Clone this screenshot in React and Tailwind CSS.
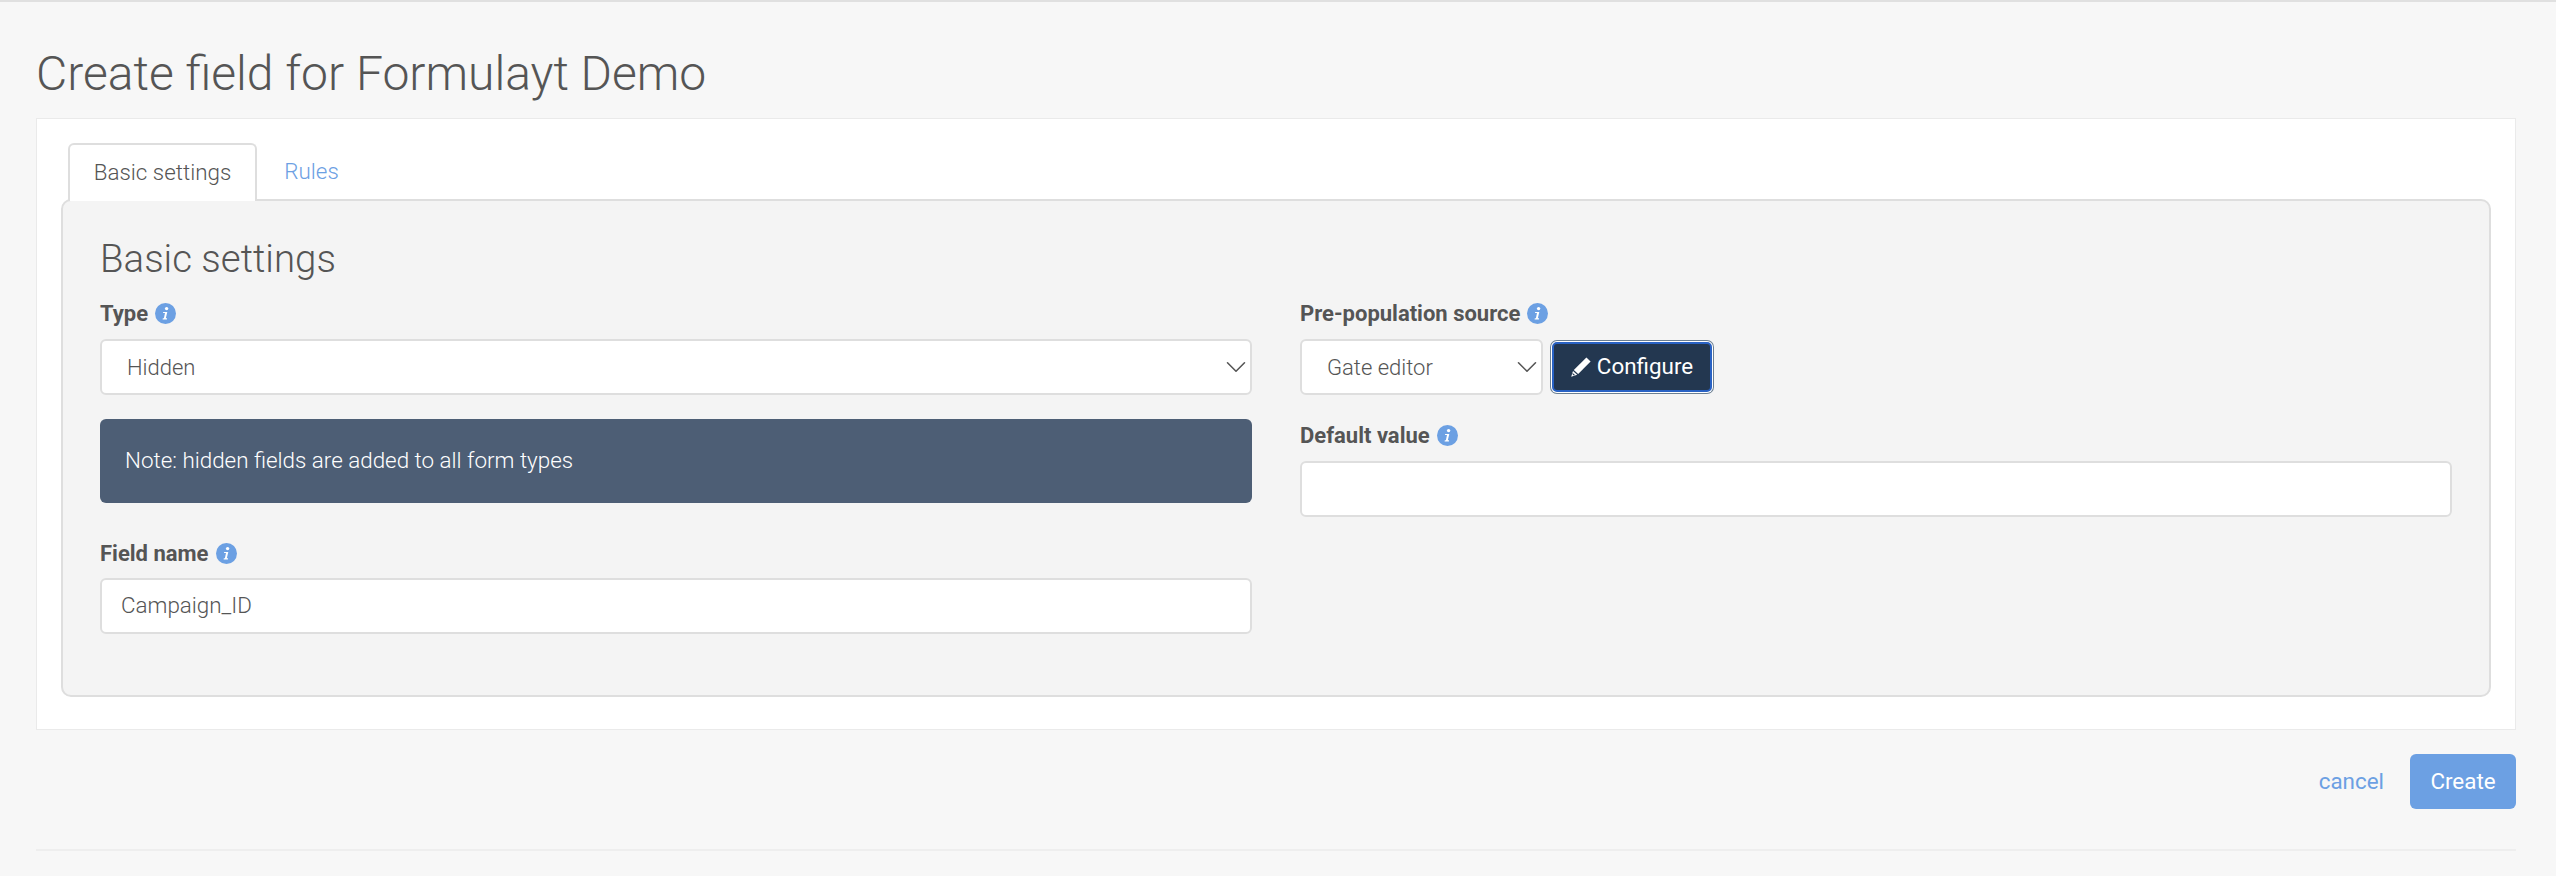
import React from "react";
import { ChevronDown } from "lucide-react";

const InfoIcon = () => (
  <svg width="21" height="21" viewBox="0 0 21 21" className="shrink-0">
    <circle cx="10.5" cy="10.5" r="10.5" fill="#6ca0e3" />
    <circle cx="11.6" cy="5.6" r="1.7" fill="#fff" />
    <path d="M8.2 9h4.1l-1.5 6.3h1.3l-.2 1.1H7.6l.2-1.1h1.1L10 10.1H8z" fill="#fff" />
  </svg>
);

const PencilIcon = () => (
  <svg width="20" height="20" viewBox="0 0 20 20" className="shrink-0">
    <path d="M15.4.6 19.6 4.4 7.2 17 2.8 13z" fill="#fff" />
    <path d="M2 14l4.2 3.8L.2 19.8z" fill="#fff" />
    <path d="M1.7 15.9l2.3 2-1.2.5-1.5-1.3z" fill="#233750" />
  </svg>
);

const FieldLabel = ({ children }) => (
  <div className="flex h-[26px] items-center gap-[7px] text-[22px] font-bold text-[#555]">
    <span>{children}</span>
    <InfoIcon />
  </div>
);

const SelectBox = ({ value, className }) => (
  <div className={`flex h-[56px] items-center justify-between rounded-[6px] border-2 border-[#dedede] bg-white pl-[25px] ${className}`}>
    <span className="text-[22px] font-light text-[#555]">{value}</span>
    <ChevronDown size={34} strokeWidth={1.1} color="#555" className="-mr-[3px] shrink-0" />
  </div>
);

export default function App() {
  return (
    <div className="min-h-[876px] border-t-2 border-[#e0e0e0] bg-[#f7f7f7] pr-[40px] pl-[36px] font-['Roboto',sans-serif] text-[#555]">
      {/* TITLE */}
      <h1 className="h-[116px] pt-[43px] text-[48px] leading-[58px] font-light text-[#555]">
        Create field for Formulayt Demo
      </h1>

      {/* CARD */}
      <div className="h-[612px] border border-[#eaeaea] bg-white pt-[24px] pr-[24px] pl-[24px]">
        {/* TABS */}
        <div className="relative z-10 flex h-[58px] pl-[7px]">
          <div className="flex h-[58px] w-[189px] items-center justify-center rounded-t-[6px] border-2 border-b-0 border-[#dedede] bg-white text-[22.4px] font-light text-[#555]">
            Basic settings
          </div>
          <div className="flex w-[109px] items-center justify-center text-[22.4px] font-light text-[#6ca0e3]">
            Rules
          </div>
        </div>

        {/* PANEL */}
        <div className="-mt-[2px] h-[498px] rounded-[10px] border-2 border-[#dedede] bg-[#f4f4f4] px-[37px] pt-[34px]">
          <h2 className="h-[65px] text-[38.4px] leading-[48px] font-light text-[#555]">Basic settings</h2>

          <div className="grid grid-cols-2 gap-[48px]">
            {/* LEFT COLUMN */}
            <div>
              <FieldLabel>Type</FieldLabel>
              <SelectBox value="Hidden" className="mt-[13px]" />
              <div className="mt-[24px] flex h-[84px] items-center rounded-[6px] bg-[#4d5e75] px-[25px] text-[22.4px] font-light text-white">
                Note: hidden fields are added to all form types
              </div>
              <div className="mt-[37px]">
                <FieldLabel>Field name</FieldLabel>
              </div>
              <div className="mt-[12px] flex h-[56px] items-center rounded-[6px] border-2 border-[#dedede] bg-white px-[19px] text-[22.4px] font-light text-[#555]">
                Campaign_ID
              </div>
            </div>

            {/* RIGHT COLUMN */}
            <div>
              <FieldLabel>Pre-population source</FieldLabel>
              <div className="mt-[13px] flex items-center gap-[9px]">
                <SelectBox value="Gate editor" className="w-[243px]" />
                <button className="flex h-[50px] w-[160px] items-center justify-center gap-[6px] rounded-[5px] border-2 border-[#2962c4] bg-[#233750] text-[22.4px] font-normal text-white shadow-[0_0_0_1px_#ffffff,0_0_0_2px_#6b7f92]">
                  <PencilIcon />
                  Configure
                </button>
              </div>
              <div className="mt-[27px]">
                <FieldLabel>Default value</FieldLabel>
              </div>
              <div className="mt-[13px] h-[56px] rounded-[6px] border-2 border-[#dedede] bg-white" />
            </div>
          </div>
        </div>
      </div>

      {/* ACTIONS */}
      <div className="mt-[24px] flex items-center justify-end gap-[26px]">
        <a className="text-[22.4px] text-[#6ca0e3]">cancel</a>
        <button className="h-[55px] w-[106px] rounded-[6px] bg-[#6ca0e3] text-[22.4px] font-normal text-white">
          Create
        </button>
      </div>

      <div className="mt-[40px] border-t-2 border-[#eeeeee]" />
    </div>
  );
}
